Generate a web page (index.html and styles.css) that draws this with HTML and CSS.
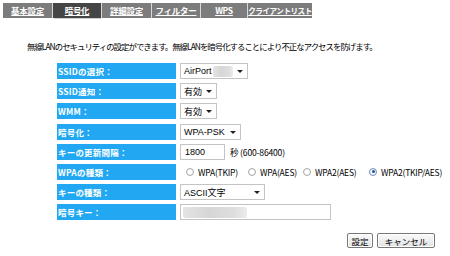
FILE: index.html
```html
<!DOCTYPE html>
<html lang="ja">
<head>
<meta charset="utf-8">
<link rel="stylesheet" href="styles.css">
</head>
<body>
<nav class="tabs">
  <a class="tab t1">基本設定</a>
  <a class="tab t2 active">暗号化</a>
  <a class="tab t3">詳細設定</a>
  <a class="tab t4">フィルター</a>
  <a class="tab t5">WPS</a>
  <a class="tab t6">クライアントリスト</a>
</nav>
<p class="desc">無線LANのセキュリティの設定ができます。無線LANを暗号化することにより不正なアクセスを防げます。</p>
<div class="form">
  <div class="label">SSIDの選択：</div>
  <div class="field"><span class="select w-ssid"><span class="val">AirPort</span><span class="blur b-ssid"></span><span class="arrow"></span></span></div>

  <div class="label">SSID通知：</div>
  <div class="field"><span class="select w-small"><span class="val">有効</span><span class="arrow"></span></span></div>

  <div class="label">WMM：</div>
  <div class="field"><span class="select w-small"><span class="val">有効</span><span class="arrow"></span></span></div>

  <div class="label">暗号化：</div>
  <div class="field"><span class="select w-enc"><span class="val">WPA-PSK</span><span class="arrow"></span></span></div>

  <div class="label">キーの更新間隔：</div>
  <div class="field"><span class="input w-interval">1800</span><span class="unit">秒 (600-86400)</span></div>

  <div class="label">WPAの種類：</div>
  <div class="field radios">
    <span class="radio r1"><span class="dot"></span>WPA(TKIP)</span>
    <span class="radio r2"><span class="dot"></span>WPA(AES)</span>
    <span class="radio r3"><span class="dot"></span>WPA2(AES)</span>
    <span class="radio r4"><span class="dot checked"></span>WPA2(TKIP/AES)</span>
  </div>

  <div class="label">キーの種類：</div>
  <div class="field"><span class="select w-type"><span class="val">ASCII文字</span><span class="arrow"></span></span></div>

  <div class="label">暗号キー：</div>
  <div class="field"><span class="input w-key"><span class="blur b-key"></span></span></div>
</div>
<div class="actions">
  <button class="btn">設定</button>
  <button class="btn btn-cancel">キャンセル</button>
</div>
</body>
</html>
```
FILE: styles.css
```css
* { box-sizing: border-box; }
body {
  margin: 0;
  width: 450px;
  height: 256px;
  background: #fff;
  font-family: "Noto Sans CJK JP", "Liberation Sans", sans-serif;
  color: #000;
  overflow: hidden;
}
.tabs {
  display: flex;
  margin: 3px 0 0 3px;
  width: 309px;
  height: 15px;
  background: #7c7c7c;
}
.tab {
  display: flex;
  align-items: center;
  justify-content: center;
  flex: none;
  height: 15px;
  color: #fff;
  font-size: 8.5px;
  font-weight: bold;
  text-decoration: underline;
  border-right: 1px solid #d8d8d8;
  letter-spacing: -0.3px;
  line-height: 1;
  white-space: nowrap;
}
.tab.active { background: #454545; box-shadow: 0 2px 0 -1px #d0d0d0; }
.t1 { width: 50px; }
.t2 { width: 49px; }
.t3 { width: 50px; }
.t4 { width: 49px; }
.t5 { width: 47px; }
.t6 { width: 64px; border-right: none; font-size: 7.6px; letter-spacing: -0.5px; }

.desc {
  margin: 23px 0 0 27px;
  font-size: 8.4px;
  line-height: 10px;
  letter-spacing: -0.95px;
  white-space: nowrap;
}
.form {
  display: grid;
  grid-template-columns: 119px auto;
  grid-auto-rows: 16px;
  column-gap: 4px;
  row-gap: 4.2px;
  margin: 12px 0 0 57px;
}
.label {
  background: #22a8f2;
  color: #fff;
  font-size: 8.5px;
  font-weight: bold;
  display: flex;
  align-items: center;
  padding-left: 1px;
  letter-spacing: 0.2px;
}
.field {
  display: flex;
  align-items: center;
  font-size: 9px;
}
.select, .input {
  display: flex;
  align-items: center;
  flex: none;
  height: 16px;
  background: #fff;
  border: 1px solid #c4c4c4;
  padding-left: 3px;
  font-family: "Liberation Sans", "Noto Sans CJK JP", sans-serif;
  font-size: 9px;
  position: relative;
  white-space: nowrap;
}
.select .val { font-family: "Liberation Sans", "Noto Sans CJK JP", sans-serif; }
.arrow {
  position: absolute;
  right: 4px;
  top: 6px;
  width: 0;
  height: 0;
  border-left: 3px solid transparent;
  border-right: 3px solid transparent;
  border-top: 3px solid #222;
}
.w-ssid { width: 68px; }
.w-small { width: 37px; }
.w-enc { width: 61px; }
.w-type { width: 85px; }
.w-interval { width: 45px; padding-left: 4px; }
.w-key { width: 151px; padding-left: 2px; }
.blur {
  display: block;
  height: 11px;
  background: linear-gradient(90deg, #e4e4e4, #d6d6d6 40%, #dedede 80%, #ececec);
  border-radius: 2px;
  filter: blur(0.6px);
}
.b-ssid { width: 20px; margin-left: 1px; }
.b-key { width: 64px; }
.unit {
  margin-left: 5px;
  font-size: 8.6px;
  letter-spacing: -0.2px;
}
.radios { gap: 0; font-size: 8.5px; letter-spacing: -0.2px; }
.radio { display: flex; align-items: center; flex: none; }
.r1 { margin-left: 6px; width: 62px; }
.r2 { width: 55px; }
.r3 { width: 66px; }
.dot {
  width: 8px;
  height: 8px;
  border-radius: 50%;
  border: 1px solid #a8a8a8;
  background: radial-gradient(circle, #fff 40%, #e8e8e8 100%);
  margin-right: 4px;
  position: relative;
}
.dot.checked { border-color: #6a8fb8; }
.dot.checked::after {
  content: "";
  position: absolute;
  left: 1.5px;
  top: 1.5px;
  width: 3px;
  height: 3px;
  border-radius: 50%;
  background: #1d4f8f;
}
.actions {
  display: flex;
  justify-content: flex-end;
  gap: 4px;
  margin: 13px 15px 0 0;
}
.btn {
  height: 15px;
  padding: 0 3px;
  font-family: "Noto Sans CJK JP", sans-serif;
  font-size: 8.5px;
  line-height: 1;
  color: #000;
  background: linear-gradient(#fbfbfb, #e2e2e2);
  border: 1px solid #777;
  border-radius: 2px;
  box-shadow: inset 0 0 0 1px #fff;
  width: 26px;
}
.btn-cancel { width: 58px; }
```
